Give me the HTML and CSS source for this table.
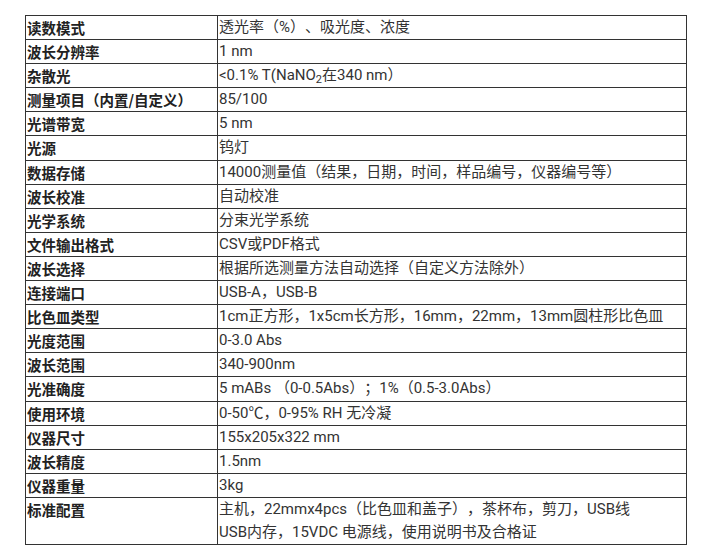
FILE: index.html
```html
<!DOCTYPE html>
<html lang="zh-CN">
<head>
<meta charset="utf-8">
<link rel="stylesheet" href="styles.css">
</head>
<body>
<table class="spec">
<colgroup><col class="c1"><col class="c2"></colgroup>
<tbody>
<tr><th>读数模式</th><td>透光率（%）、吸光度、浓度</td></tr>
<tr><th>波长分辨率</th><td>1 nm</td></tr>
<tr><th>杂散光</th><td>&lt;0.1% T(NaNO<sub>2</sub>在340 nm）</td></tr>
<tr><th>测量项目（内置/自定义）</th><td>85/100</td></tr>
<tr><th>光谱带宽</th><td>5 nm</td></tr>
<tr><th>光源</th><td>钨灯</td></tr>
<tr><th>数据存储</th><td>14000测量值（结果，日期，时间，样品编号，仪器编号等）</td></tr>
<tr><th>波长校准</th><td>自动校准</td></tr>
<tr><th>光学系统</th><td>分束光学系统</td></tr>
<tr><th>文件输出格式</th><td>CSV或PDF格式</td></tr>
<tr><th>波长选择</th><td>根据所选测量方法自动选择（自定义方法除外）</td></tr>
<tr><th>连接端口</th><td>USB-A，USB-B</td></tr>
<tr><th>比色皿类型</th><td>1cm正方形，1x5cm长方形，16mm，22mm，13mm圆柱形比色皿</td></tr>
<tr><th>光度范围</th><td>0-3.0 Abs</td></tr>
<tr><th>波长范围</th><td>340-900nm</td></tr>
<tr><th>光准确度</th><td>5 mABs （0-0.5Abs）；1%（0.5-3.0Abs）</td></tr>
<tr><th>使用环境</th><td>0-50℃，0-95% RH 无冷凝</td></tr>
<tr><th>仪器尺寸</th><td>155x205x322 mm</td></tr>
<tr><th>波长精度</th><td>1.5nm</td></tr>
<tr><th>仪器重量</th><td>3kg</td></tr>
<tr><th>标准配置</th><td>主机，22mmx4pcs（比色皿和盖子），茶杯布，剪刀，USB线<br>USB内存，15VDC 电源线，使用说明书及合格证</td></tr>
</tbody>
</table>
</body>
</html>
```
FILE: styles.css
```css
html, body {
  margin: 0;
  padding: 0;
  background: #ffffff;
}
body {
  padding: 15px 0 0 25px;
  font-family: "Noto Sans CJK SC", "Noto Sans", sans-serif;
  font-size: 14px;
  color: #333333;
}
.spec {
  border-collapse: collapse;
  width: 661px;
  table-layout: fixed;
}
.c1 { width: 192px; }
.c2 { width: 469px; }
.spec th, .spec td {
  border: 1px solid #333333;
  padding: 0 1px;
  line-height: 23.1px;
  text-align: left;
  vertical-align: top;
  white-space: nowrap;
  text-spacing-trim: space-all;
}
.spec th {
  font-weight: bold;
  font-size: 14.5px;
  color: #222222;
}
.spec td {
  font-family: Roboto, "Noto Sans CJK SC", sans-serif;
  font-weight: normal;
  font-size: 15px;
}
.spec sub {
  font-size: 11px;
  vertical-align: -3px;
  line-height: 0;
}
```
